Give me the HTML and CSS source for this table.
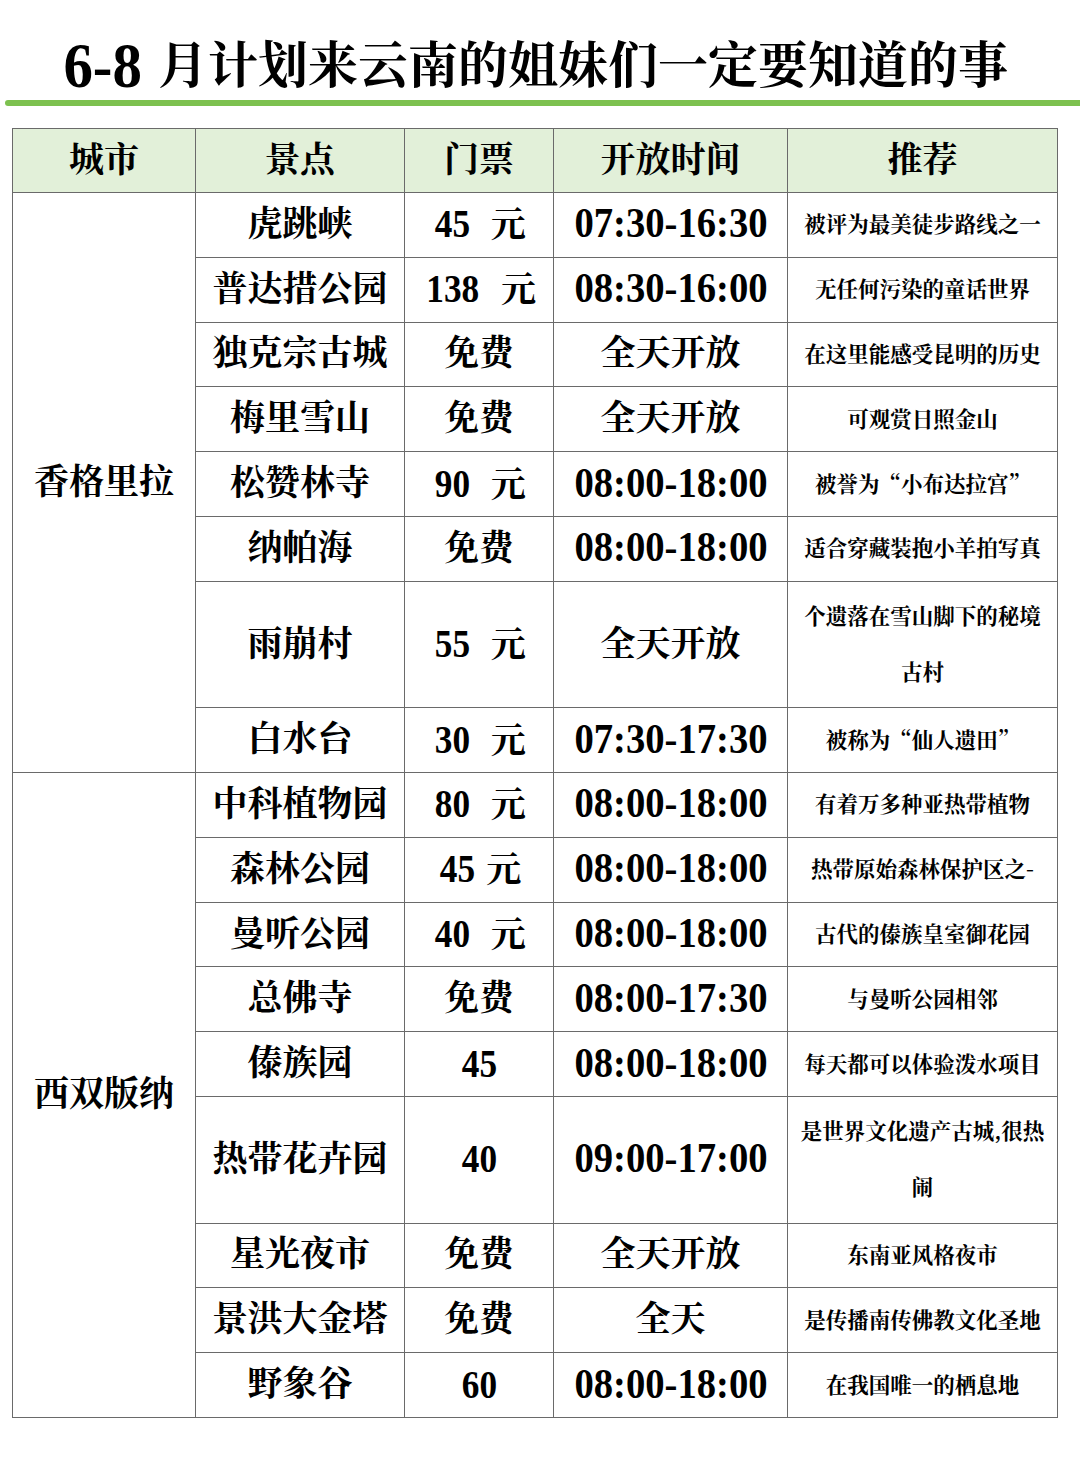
FILE: index.html
```html
<!DOCTYPE html>
<html lang="zh-CN">
<head>
<meta charset="utf-8">
<title>6-8 月计划来云南的姐妹们一定要知道的事</title>
<link rel="stylesheet" href="styles.css">
</head>
<body>
<div class="page">
  <h1 class="title"><span class="title-num">6-8</span> 月计划来云南的姐妹们一定要知道的事</h1>
  <div class="bar"></div>
  <table class="sheet">
    <colgroup>
      <col class="c-city"><col class="c-spot"><col class="c-price"><col class="c-time"><col class="c-rec">
    </colgroup>
    <thead>
      <tr class="head"><th>城市</th><th>景点</th><th>门票</th><th>开放时间</th><th>推荐</th></tr>
    </thead>
    <tbody>
      <tr><td class="city" rowspan="8">香格里拉</td><td>虎跳峡</td><td><span class="n">45</span>&nbsp; 元</td><td><span class="t">07:30-16:30</span></td><td class="rec">被评为最美徒步路线之一</td></tr>
      <tr><td>普达措公园</td><td><span class="n">138</span>&nbsp; 元</td><td><span class="t">08:30-16:00</span></td><td class="rec">无任何污染的童话世界</td></tr>
      <tr><td>独克宗古城</td><td>免费</td><td>全天开放</td><td class="rec">在这里能感受昆明的历史</td></tr>
      <tr><td>梅里雪山</td><td>免费</td><td>全天开放</td><td class="rec">可观赏日照金山</td></tr>
      <tr><td>松赞林寺</td><td><span class="n">90</span>&nbsp; 元</td><td><span class="t">08:00-18:00</span></td><td class="rec">被誉为“小布达拉宫”</td></tr>
      <tr><td>纳帕海</td><td>免费</td><td><span class="t">08:00-18:00</span></td><td class="rec">适合穿藏装抱小羊拍写真</td></tr>
      <tr class="tall"><td>雨崩村</td><td><span class="n">55</span>&nbsp; 元</td><td>全天开放</td><td class="rec two">个遗落在雪山脚下的秘境<br>古村</td></tr>
      <tr><td>白水台</td><td><span class="n">30</span>&nbsp; 元</td><td><span class="t">07:30-17:30</span></td><td class="rec">被称为“仙人遗田”</td></tr>
      <tr><td class="city" rowspan="9">西双版纳</td><td>中科植物园</td><td><span class="n">80</span>&nbsp; 元</td><td><span class="t">08:00-18:00</span></td><td class="rec">有着万多种亚热带植物</td></tr>
      <tr><td>森林公园</td><td><span class="n">45</span> 元</td><td><span class="t">08:00-18:00</span></td><td class="rec">热带原始森林保护区之-</td></tr>
      <tr><td>曼听公园</td><td><span class="n">40</span>&nbsp; 元</td><td><span class="t">08:00-18:00</span></td><td class="rec">古代的傣族皇室御花园</td></tr>
      <tr><td>总佛寺</td><td>免费</td><td><span class="t">08:00-17:30</span></td><td class="rec">与曼听公园相邻</td></tr>
      <tr><td>傣族园</td><td><span class="n">45</span></td><td><span class="t">08:00-18:00</span></td><td class="rec">每天都可以体验泼水项目</td></tr>
      <tr class="tall"><td>热带花卉园</td><td><span class="n">40</span></td><td><span class="t">09:00-17:00</span></td><td class="rec two">是世界文化遗产古城,很热<br>闹</td></tr>
      <tr><td>星光夜市</td><td>免费</td><td>全天开放</td><td class="rec">东南亚风格夜市</td></tr>
      <tr><td>景洪大金塔</td><td>免费</td><td>全天</td><td class="rec">是传播南传佛教文化圣地</td></tr>
      <tr><td>野象谷</td><td><span class="n">60</span></td><td><span class="t">08:00-18:00</span></td><td class="rec">在我国唯一的栖息地</td></tr>
    </tbody>
  </table>
</div>
</body>
</html>
```

FILE: styles.css
```css
html, body {
  margin: 0;
  padding: 0;
  background: #ffffff;
}

body {
  font-family: "Liberation Serif", "Noto Serif CJK SC", "Noto Sans CJK SC", serif;
  color: #000000;
}

.page {
  width: 1080px;
  height: 1466px;
  overflow: hidden;
}

.title {
  margin: 0;
  padding-top: 36px;
  padding-right: 12px;
  height: 60px;
  line-height: 60px;
  font-size: 50px;
  font-weight: 700;
  text-align: center;
  white-space: nowrap;
}

.title-num {
  font-size: 64px;
  vertical-align: top;
  display: inline-block;
  transform: scaleX(0.92);
}

.bar {
  margin-top: 4px;
  margin-left: 5px;
  height: 6px;
  width: 1090px;
  background: #7dc14f;
  border-radius: 3px;
}

.sheet {
  margin-top: 22px;
  margin-left: 12px;
  width: 1045px;
  table-layout: fixed;
  border-collapse: collapse;
  border: 1px solid #5c5c5c;
}

.c-city { width: 183px; }
.c-spot { width: 209px; }
.c-price { width: 149px; }
.c-time { width: 234px; }
.c-rec { width: 270px; }

.sheet th,
.sheet td {
  border: 1px solid #6a6a6a;
  padding: 0 4px;
  text-align: center;
  vertical-align: middle;
  font-weight: 700;
  font-size: 35px;
  line-height: 40px;
  white-space: nowrap;
}

.head {
  height: 64px;
}

.head th {
  background: #e2f0d9;
  font-size: 35px;
}

.sheet tbody tr {
  height: 64.8px;
}

.sheet tbody tr.tall {
  height: 126.5px;
}

.sheet td.city {
  font-size: 35px;
}

.n {
  display: inline-block;
  font-size: 41px;
  transform: scaleX(0.86);
}

.t {
  display: inline-block;
  font-size: 42px;
  transform: scaleX(0.92);
}

.sheet td.rec {
  font-family: "Noto Serif CJK SC", "Noto Sans CJK SC", serif;
  font-size: 21.5px;
  line-height: 30px;
  padding: 0 2px 3px;
}

.sheet td.rec.two {
  line-height: 56px;
}
```
